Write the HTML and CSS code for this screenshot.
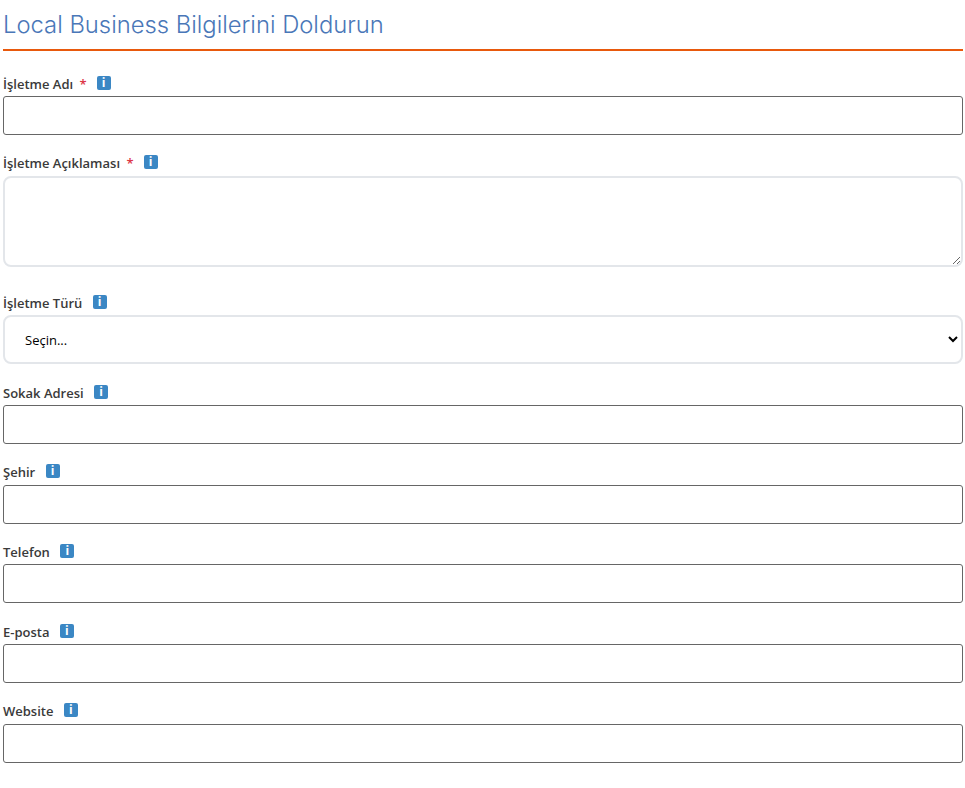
FILE: index.html
```html
<!DOCTYPE html>
<html lang="tr">
<head>
    <meta charset="UTF-8">
    <meta name="viewport" content="width=device-width, initial-scale=1.0">
    <title>Local Business Bilgilerini Doldurun</title>
    <link rel="stylesheet" href="styles.css">
</head>
<body>
    <div class="content">
        <h2 class="title">Local Business Bilgilerini Doldurun</h2>
        <form>
            <div class="field">
                <label for="name">İşletme Adı <span class="req">*</span> <span class="info">i</span></label>
                <input type="text" id="name" name="name">
            </div>
            <div class="field field-area">
                <label for="description">İşletme Açıklaması <span class="req">*</span> <span class="info">i</span></label>
                <textarea id="description" name="description"></textarea>
            </div>
            <div class="field">
                <label for="type">İşletme Türü <span class="info">i</span></label>
                <select id="type" name="type">
                    <option>Seçin...</option>
                </select>
            </div>
            <div class="field">
                <label for="street">Sokak Adresi <span class="info">i</span></label>
                <input type="text" id="street" name="street">
            </div>
            <div class="field">
                <label for="city">Şehir <span class="info">i</span></label>
                <input type="text" id="city" name="city">
            </div>
            <div class="field">
                <label for="phone">Telefon <span class="info">i</span></label>
                <input type="tel" id="phone" name="phone">
            </div>
            <div class="field">
                <label for="email">E-posta <span class="info">i</span></label>
                <input type="email" id="email" name="email">
            </div>
            <div class="field">
                <label for="website">Website <span class="info">i</span></label>
                <input type="text" id="website" name="website">
            </div>
        </form>
    </div>
</body>
</html>
```

FILE: styles.css
```css
body {
    margin: 0;
    background-color: #fff;
    font-family: "Open Sans", "Liberation Sans", sans-serif;
}
.content {
    padding: 0 2px 0 3px;
}
.title {
    margin: 0 0 23.6px;
    height: 49px;
    line-height: 49px;
    border-bottom: 2px solid #e8590c;
    font-family: Inter, "Open Sans", sans-serif;
    font-size: 23.8px;
    font-weight: 300;
    color: #4a77b8;
}
.field {
    margin-bottom: 19.3px;
}
.field-area {
    margin-bottom: 27.2px;
}
label {
    display: flex;
    align-items: center;
    height: 18px;
    margin-bottom: 3.4px;
    font-size: 13px;
    font-weight: 600;
    color: #3a3a3a;
    white-space: pre-wrap;
}
.req {
    margin-left: 3px;
    margin-right: 3px;
    color: #dc3545;
}
.info {
    width: 14px;
    height: 14px;
    margin-top: -2px;
    margin-left: 7px;
    border-radius: 2px;
    background-color: #3b87c4;
    color: #fff;
    font-size: 12px;
    font-weight: 700;
    line-height: 14px;
    text-align: center;
}
input, textarea, select {
    display: block;
    width: 100%;
    box-sizing: border-box;
    background-color: #fff;
}
input {
    height: 39px;
    border: 1px solid #666;
    border-radius: 3px;
}
textarea {
    height: 91px;
    border: 2px solid #e3e6ea;
    border-radius: 8px;
}
select {
    height: 49px;
    padding-top: 1px;
    padding-left: 16px;
    border: 2px solid #e3e6ea;
    border-radius: 8px;
    font-family: "Open Sans", sans-serif;
    font-size: 13px;
    color: #000;
}
```
